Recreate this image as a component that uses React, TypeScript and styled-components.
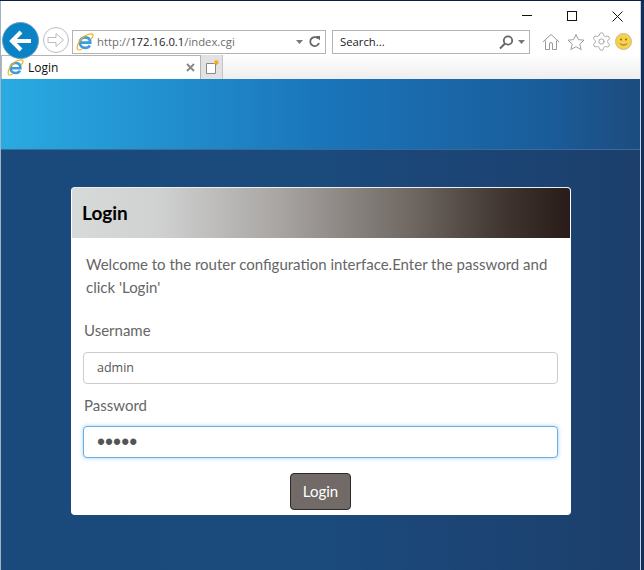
import React from "react";
import styled, { createGlobalStyle } from "styled-components";
import { Settings } from "lucide-react";

const Global = createGlobalStyle`
  html, body { margin: 0; padding: 0; width: 644px; height: 570px; overflow: hidden; background: #0d2c52; }
  * { box-sizing: border-box; }
`;
const Frame = styled.div`
  width: 644px; height: 570px; display: flex; flex-direction: column;
  border-top: 1px solid #0a2344;
  background: #0e2f58;
  position: relative;
`;
const Window = styled.div`
  width: 641px; height: 569px; display: flex; flex-direction: column; background: #fff;
  border-left: 1px solid #9fb2c6;
  border-right: 1px solid #c6d2de;
`;
const Chrome = styled.div`
  height: 78px; display: flex; flex-direction: column; background: #fff; position: relative;
`;
const Caption = styled.div`
  height: 27px; display: flex; justify-content: flex-end; align-items: center;
  padding: 3px 17px 0 0; gap: 35px;
`;
const NavRow = styled.div`
  height: 27px; display: flex; align-items: center; padding-left: 71px;
`;
const BackButton = styled.div`
  position: absolute; left: 1px; top: 21px; width: 37px; height: 37px; border-radius: 50%;
  background: #0a83c6; display: flex; align-items: center; justify-content: center;
  border: 1px solid #6f9fbe;
`;
const ForwardButton = styled.div`
  position: absolute; left: 42px; top: 26px; width: 26px; height: 26px; border-radius: 50%;
  background: #fff; border: 1px solid #bdbdbd; display: flex; align-items: center; justify-content: center;
`;
const Field = styled.div<{ $w: number }>`
  width: ${p => p.$w}px; height: 24px; border: 1px solid #b4b4b4; display: flex; align-items: center;
  font: 11.3px "Open Sans", sans-serif; color: #6d6d6d; background: #fff; white-space: nowrap;
`;
const Address = styled.span`margin-left: 3px;`;
const Strong = styled.span`color: #1a1a1a;`;
const Grow = styled.span`flex: 1;`;
const SearchText = styled.span`color: #1a1a1a; padding-left: 7px;`;
const ToolIcons = styled.div`
  display: flex; align-items: center; gap: 7px; margin-left: 12px;
`;
const TabRow = styled.div`
  height: 24px; display: flex; align-items: stretch;
  background: linear-gradient(180deg, #fff 0%, #eeeeee 100%);
`;
const Tab = styled.div`
  width: 200px; margin-left: 0; border: 1px solid #b4b4b4; border-bottom: none; background: #fff;
  display: flex; align-items: center; gap: 4px; padding: 0 5px 0 5px;
  font: 12px "Open Sans", sans-serif; color: #111;
`;
const NewTab = styled.div`
  width: 22px; background: #e2e2e2; border-right: 1px solid #c4c4c4; display: flex; align-items: center; justify-content: center;
`;
const Banner = styled.div`
  height: 71px; background: linear-gradient(90deg, #29abe2 0%, #1a75ba 50%, #1a5d9b 85%, #1d4c7e 100%);
  border-bottom: 1px solid #3e6a98;
`;
const Page = styled.main`
  flex: 1; background: linear-gradient(90deg, #1a4a7c 0%, #1b4a7d 50%, #1c3f6c 100%);
  padding: 37px 69px 0 70px;
`;
const Card = styled.section`
  width: 500px; height: 328px; background: #fff; border-radius: 4px; border: 1px solid #fff; border-top-color: #e8eef4;
  display: flex; flex-direction: column; overflow: hidden; position: relative;
  &::before, &::after {
    content: ""; position: absolute; right: -1px; width: 1px; background: #8ea2b8;
  }
  &::before { top: 50px; height: 76px; }
  &::after { top: 275px; height: 50px; }
`;
const CardHeader = styled.header`
  height: 50px; padding: 0 10px 2px; display: flex; align-items: center; flex: none;
  background: linear-gradient(90deg, #d6dad9 0%, #d0d2d1 17%, #a8a4a2 42%, #6f6863 68%, #3d322d 88%, #291c18 100%);
`;
const Title = styled.h1`
  margin: 0; font: 700 19px "Lato", sans-serif; color: #000;
`;
const Intro = styled.p`
  margin: 0; padding: 15px 14px 0 14px; font: 15px/23px "Lato", sans-serif; color: #666;
`;
const Form = styled.form`
  padding: 0 11px; display: flex; flex-direction: column;
`;
const Label = styled.label<{ $top: number; $bottom: number }>`
  font: 15px/20px "Lato", sans-serif; color: #666; padding-left: 1px;
  margin-top: ${p => p.$top}px; margin-bottom: ${p => p.$bottom}px;
`;
const Input = styled.input<{ $focus?: boolean }>`
  width: 475px; height: 32px; padding: ${p => (p.$focus ? "0 13px" : "0 13px 2px")}; border-radius: 4px; outline: none; flex: none;
  font: ${p => (p.$focus ? '23px "Liberation Sans"' : '12.5px "Open Sans"')}, sans-serif; color: #555;
  background: #fff;
  border: 1px solid ${p => (p.$focus ? "#66afe9" : "#ccc")};
  box-shadow: ${p => (p.$focus ? "0 0 4px rgba(102,175,233,.6)" : "none")};
`;
const Submit = styled.button`
  align-self: center; margin: 15px 0 0 -1px; width: 61px; height: 37px; border-radius: 4px; flex: none;
  background: #716a66; border: 1px solid #2d2a29; color: #fff; font: 15px "Lato", sans-serif; padding: 0 0 2px;
`;

const IE = ({ size = 17 }: { size?: number }) => (
  <svg width={size} height={size} viewBox="0 0 20 20" fill="none">
    <path d="M5 10.800H15.800C15.800 7 13.500 4.800 10.300 4.800 7 4.800 4.300 7.300 4.300 10.800 4.300 14.300 7 16.500 10.300 16.500 12.500 16.500 14.300 15.500 15.500 13.800" stroke="#3c9ddd" strokeWidth="3" />
    <path d="M1.800 18.500C.3 15 3 8 9 3.800 13 1 17.500.3 18.700 1.800 19.500 3.300 18 5.500 16.300 7" stroke="#f2b21b" strokeWidth="1.400" />
    <path d="M1.800 18.500C3 19.300 5 18.700 7 17.500" stroke="#f2b21b" strokeWidth="1.200" />
  </svg>
);

export default function App() {
  return (
    <Frame>
      <Global />
      <Window>
        <Chrome>
          <Caption>
            <svg width="10" height="10"><path d="M0 4.500h10" stroke="#111" /></svg>
            <svg width="10" height="10"><rect x=".5" y=".5" width="9" height="9" fill="none" stroke="#111" /></svg>
            <svg width="11" height="11"><path d="M.5.500l10 10M10.500.500l-10 10" stroke="#111" /></svg>
          </Caption>
          <NavRow>
            <Field $w={254}>
              <svg width="3" height="1" />
              <IE size={18} />
              <Address>http://<Strong>172.16.0.1</Strong>/index.cgi</Address>
              <Grow />
              <svg width="10" height="6" viewBox="0 0 10 6"><path d="M1 1h7L4.500 5Z" fill="#777" /></svg>
              <svg width="20" height="14" viewBox="0 0 20 14"><path d="M13 3.500A4.500 4.500 0 1 0 14 8" fill="none" stroke="#666" strokeWidth="1.800" /><path d="M10.500 1h4.500v4.500Z" fill="#666" /></svg>
            </Field>
            <svg width="6" height="1" />
            <Field $w={198}>
              <SearchText>Search...</SearchText>
              <Grow />
              <svg width="17" height="16" viewBox="0 0 17 16"><circle cx="10" cy="6.500" r="4.200" fill="none" stroke="#666" strokeWidth="1.800" /><path d="M7 9.500l-5 5" stroke="#666" strokeWidth="2" /></svg>
              <svg width="14" height="6" viewBox="0 0 14 6"><path d="M3 1h7L6.500 5Z" fill="#777" /></svg>
            </Field>
            <ToolIcons>
              <svg width="18" height="18" viewBox="0 0 18 18" fill="none" stroke="#999"><path d="M.8 9 9 1.500 17.200 9M3.500 7.500v9h4V11a1.500 1.500 0 0 1 3 0v5.500h4v-9" /></svg>
              <svg width="18" height="18" viewBox="0 0 19 18" fill="none" stroke="#999"><path d="M9.500 1l2.500 5.500 6 .6-4.500 4 1.400 6-5.400-3.200L4.100 17l1.400-6L1 7.100l6-.6Z" /></svg>
              <Settings size={21} color="#999" strokeWidth={1} style={{ margin: "0 -1.500px" }} />
              <svg style={{ marginLeft: -2 }} width="17" height="17" viewBox="0 0 17 17"><circle cx="8.500" cy="8.500" r="8" fill="#f7d04c" stroke="#c9bd8a" /><circle cx="6" cy="6.500" r="1" fill="#7a6a20" /><circle cx="11" cy="6.500" r="1" fill="#7a6a20" /><path d="M5 10.500c1.500 2 5.500 2 7 0" fill="none" stroke="#7a6a20" /></svg>
            </ToolIcons>
          </NavRow>
          <TabRow>
            <Tab>
              <IE size={17} />
              <span>Login</span>
              <Grow />
              <svg width="9" height="9"><path d="M1 1l7 7M8 1L1 8" stroke="#8a8a8a" strokeWidth="2" /></svg>
            </Tab>
            <NewTab>
              <svg width="16" height="16" viewBox="0 0 16 16"><path d="M2.500 4.500h9v10h-9Z" fill="#fff" stroke="#888" /><path d="M12 0l.8 2 2-.6-.9 2 1.300 1.200-2 .4-.7 1.800-1-1.800-2-.2 1.400-1.400L10 1.400l1.500.6Z" fill="#f4a71d" /></svg>
            </NewTab>
          </TabRow>
          <BackButton>
            <svg width="24" height="22" viewBox="0 0 24 22" fill="none" stroke="#fff" strokeWidth="4"><path d="M22 11H4M12 2l-9 9 9 9" /></svg>
          </BackButton>
          <ForwardButton>
            <svg width="18" height="16" viewBox="0 0 18 16" fill="none" stroke="#bbb"><path d="M1 5.500h8V1.500L16.500 8 9 14.500v-4H1Z" /></svg>
          </ForwardButton>
        </Chrome>
        <Banner />
        <Page>
          <Card>
            <CardHeader><Title>Login</Title></CardHeader>
            <Intro>Welcome to the router configuration interface.Enter the password and click 'Login'</Intro>
            <Form>
              <Label $top={21} $bottom={12}>Username</Label>
              <Input defaultValue="admin" />
              <Label $top={11} $bottom={11}>Password</Label>
              <Input $focus type="password" defaultValue="admin" />
              <Submit type="button">Login</Submit>
            </Form>
          </Card>
        </Page>
      </Window>
    </Frame>
  );
}
